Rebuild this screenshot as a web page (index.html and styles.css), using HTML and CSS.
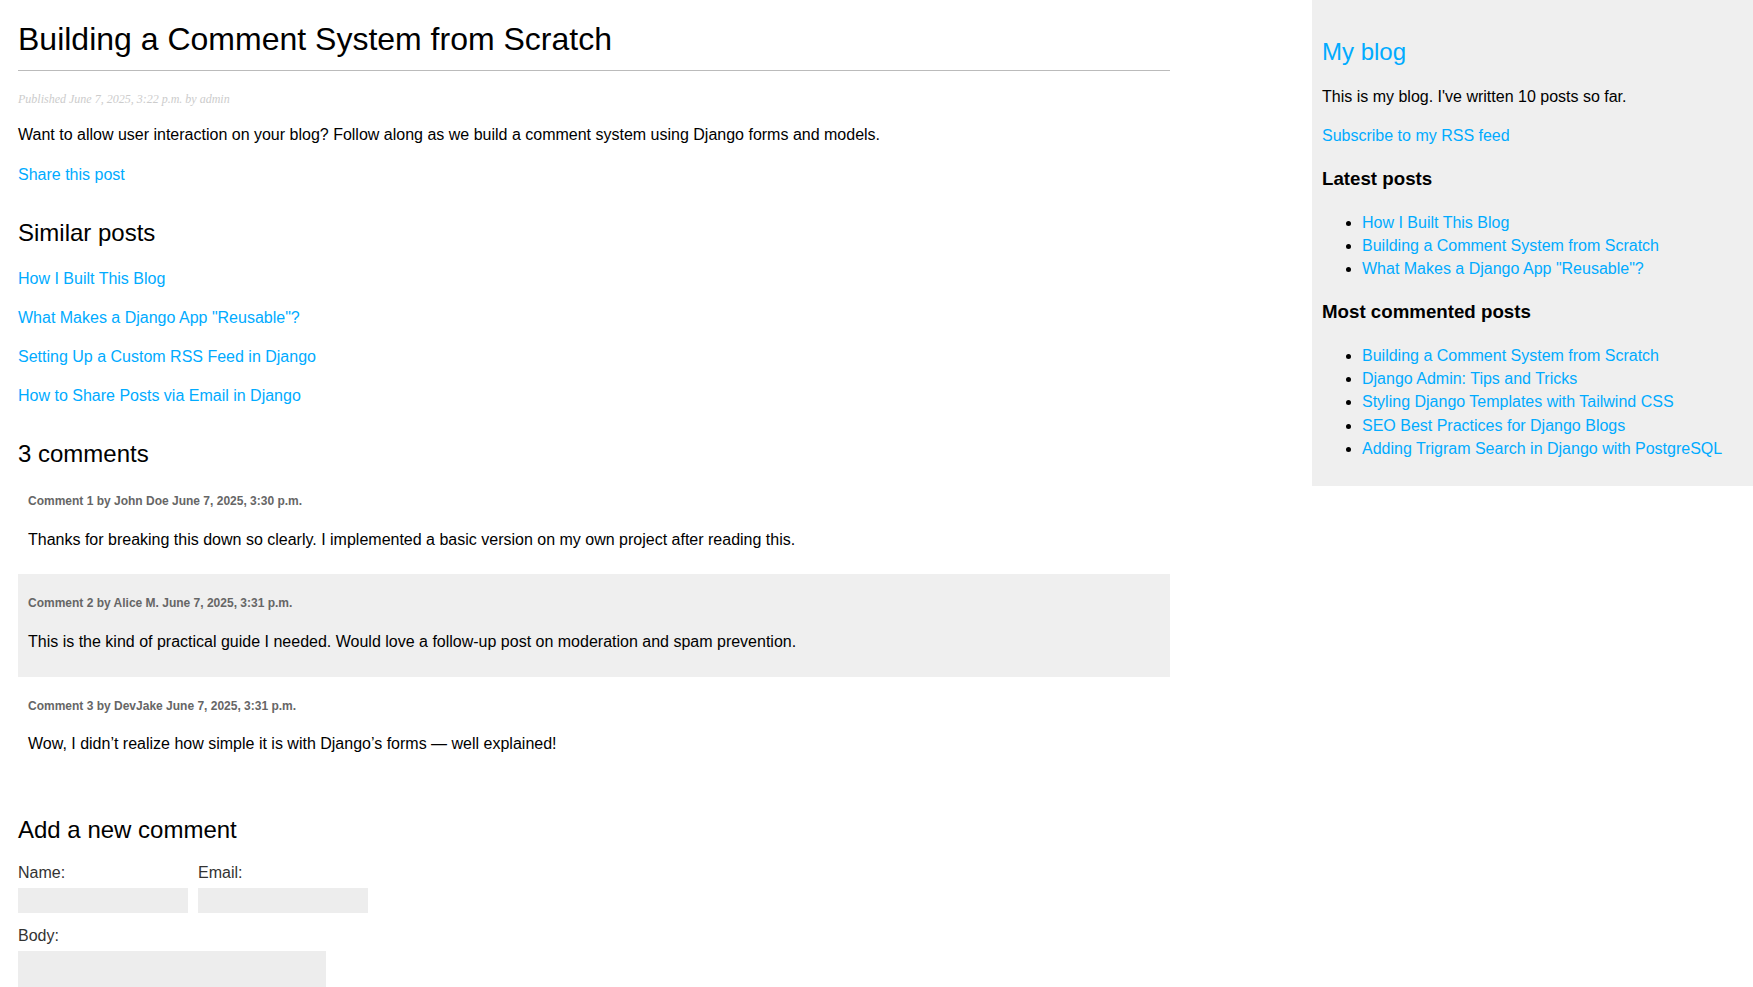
FILE: index.html
```html
<!DOCTYPE html>
<html lang="en">
<head>
<meta charset="utf-8">
<title>Building a Comment System from Scratch</title>
<link rel="stylesheet" href="styles.css">
</head>
<body>
<div class="page">
  <main class="content">
    <h1>Building a Comment System from Scratch</h1>
    <p class="date">Published June 7, 2025, 3:22 p.m. by admin</p>
    <p>Want to allow user interaction on your blog? Follow along as we build a comment system using Django forms and models.</p>
    <p><a href="#">Share this post</a></p>

    <h2>Similar posts</h2>
    <p><a href="#">How I Built This Blog</a></p>
    <p><a href="#">What Makes a Django App "Reusable"?</a></p>
    <p><a href="#">Setting Up a Custom RSS Feed in Django</a></p>
    <p><a href="#">How to Share Posts via Email in Django</a></p>

    <h2>3 comments</h2>
    <div class="comments">
      <div class="comment">
        <p class="info">Comment 1 by John Doe June 7, 2025, 3:30 p.m.</p>
        <p>Thanks for breaking this down so clearly. I implemented a basic version on my own project after reading this.</p>
      </div>
      <div class="comment">
        <p class="info">Comment 2 by Alice M. June 7, 2025, 3:31 p.m.</p>
        <p>This is the kind of practical guide I needed. Would love a follow-up post on moderation and spam prevention.</p>
      </div>
      <div class="comment">
        <p class="info">Comment 3 by DevJake June 7, 2025, 3:31 p.m.</p>
        <p>Wow, I didn’t realize how simple it is with Django’s forms — well explained!</p>
      </div>
    </div>

    <h2 class="form-title">Add a new comment</h2>
    <form class="comment-form">
      <div class="form-row">
        <div class="field">
          <label for="id_name">Name:</label>
          <input type="text" id="id_name">
        </div>
        <div class="field">
          <label for="id_email">Email:</label>
          <input type="email" id="id_email">
        </div>
      </div>
      <div class="field">
        <label for="id_body">Body:</label>
        <textarea id="id_body"></textarea>
      </div>
    </form>
  </main>

  <aside class="sidebar">
    <h2 class="blog-title"><a href="#">My blog</a></h2>
    <p>This is my blog. I've written 10 posts so far.</p>
    <p><a href="#">Subscribe to my RSS feed</a></p>
    <h3>Latest posts</h3>
    <ul>
      <li><a href="#">How I Built This Blog</a></li>
      <li><a href="#">Building a Comment System from Scratch</a></li>
      <li><a href="#">What Makes a Django App "Reusable"?</a></li>
    </ul>
    <h3>Most commented posts</h3>
    <ul>
      <li><a href="#">Building a Comment System from Scratch</a></li>
      <li><a href="#">Django Admin: Tips and Tricks</a></li>
      <li><a href="#">Styling Django Templates with Tailwind CSS</a></li>
      <li><a href="#">SEO Best Practices for Django Blogs</a></li>
      <li><a href="#">Adding Trigram Search in Django with PostgreSQL</a></li>
    </ul>
  </aside>
</div>
</body>
</html>
```

FILE: styles.css
```css
html, body {
  margin: 0;
  padding: 0;
}

body {
  font-family: "Liberation Sans", Arial, Helvetica, sans-serif;
  font-size: 16px;
  line-height: 1.45;
  color: #000;
  background: #fff;
}

a {
  color: #00abff;
  text-decoration: none;
}

.page {
  display: flex;
  align-items: flex-start;
}

.content {
  width: 1152px;
  padding: 0 0 0 18px;
}

h1 {
  font-size: 32px;
  font-weight: normal;
  margin: 16px 0 21px;
  padding: 0 0 8px 0;
  border-bottom: 1px solid #bbb;
}

h2 {
  font-size: 24px;
  font-weight: normal;
  margin: 30px 0 0;
}

p {
  margin: 16px 0;
}

p.date {
  color: #ccc;
  font-family: "Liberation Serif", Georgia, serif;
  font-size: 12px;
  font-style: italic;
  line-height: normal;
  margin: 12px 0;
}

.comment {
  padding: 10px;
}

.comment:nth-child(even) {
  background: #efefef;
}

.comment .info {
  font-weight: bold;
  font-size: 12px;
  line-height: 1.3;
  color: #666;
  margin: 12px 0 18px;
}

.comment p:last-child {
  margin-bottom: 13.5px;
}

h2.form-title {
  margin-top: 34px;
}

.comment-form {
  margin-top: 13px;
}

.form-row {
  display: flex;
  gap: 10px;
}

.field {
  display: flex;
  flex-direction: column;
  align-items: flex-start;
}

label {
  color: #333;
  margin-bottom: 4px;
}

input, textarea {
  margin: 0 0 11px;
  background: #ededed;
  border: 0;
  padding: 6px 10px;
  font-size: 12px;
  font-family: "Liberation Sans", Arial, sans-serif;
  box-sizing: border-box;
}

input {
  width: 170px;
  height: 25px;
}

textarea {
  width: 308px;
  height: 60px;
  resize: none;
}

.sidebar {
  margin-left: auto;
  width: 421px;
  padding: 10px;
  background: #efefef;
}

.sidebar h2.blog-title {
  margin: 24px 0 0;
  line-height: 35px;
}

.sidebar h3 {
  font-size: 18.72px;
  margin: 17.7px 0 18.72px;
}

.sidebar ul {
  margin: 15px 0 16px;
  padding-left: 40px;
}
```
